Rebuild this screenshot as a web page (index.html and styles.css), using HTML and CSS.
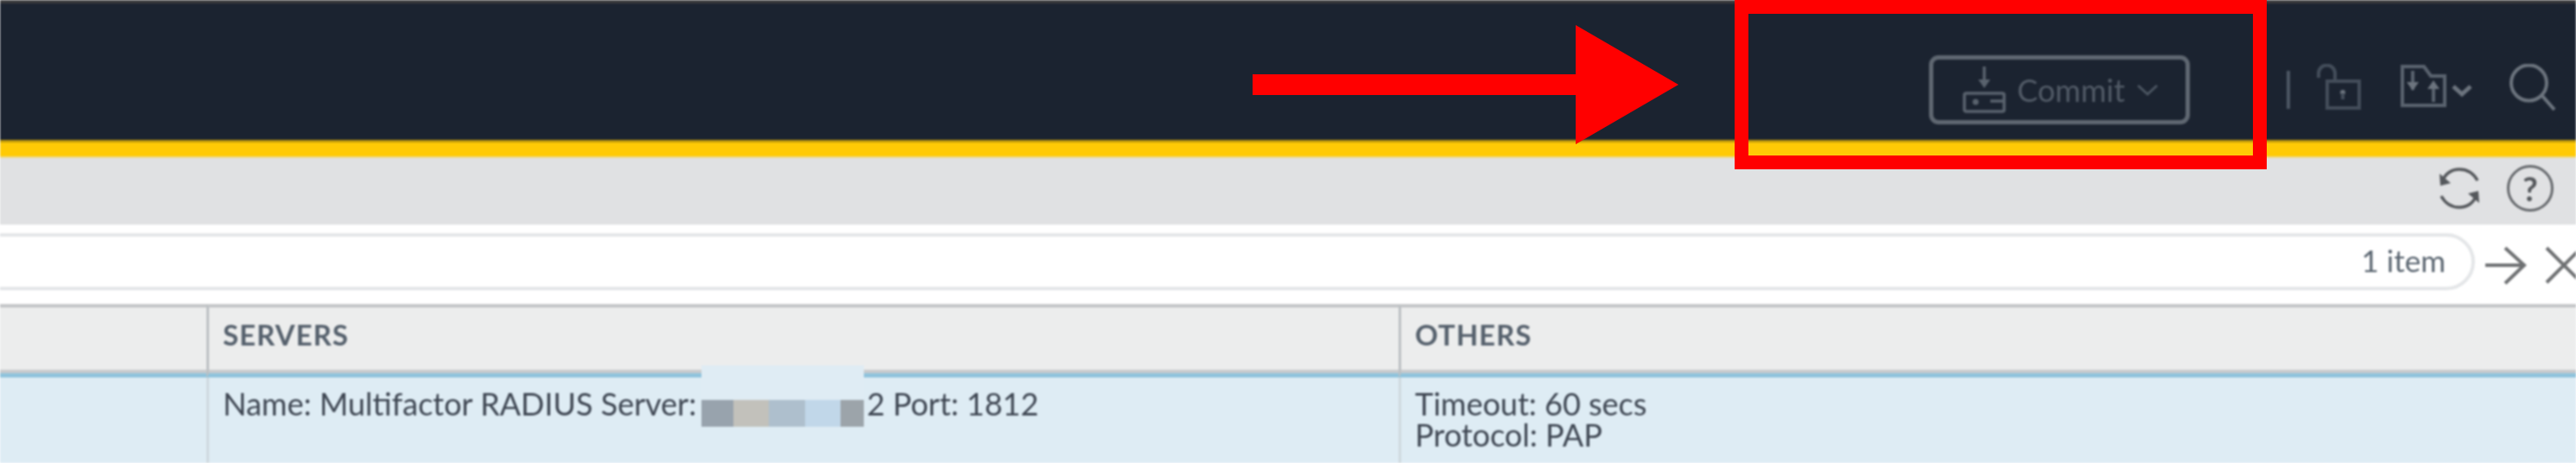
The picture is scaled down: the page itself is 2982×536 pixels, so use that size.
FILE: index.html
```html
<!DOCTYPE html>
<html lang="en">

<head>
    <meta charset="UTF-8">
    <meta name="viewport" content="width=device-width, initial-scale=1.0">
    <title>Authentication Profile - Commit</title>
    <link rel="stylesheet" href="styles.css">
</head>

<body>
    <div class="page">
        <div class="screen">
            <!-- top bar -->
            <header class="topbar">
                <button class="commit" type="button">
                    <svg class="commit-icon" width="50" height="54" viewBox="0 0 50 54">
                        <path class="line" d="M25 0V20" />
                        <path class="fill" d="M18 15L25 25L32 15Z" />
                        <rect class="line" x="2" y="31" width="46" height="21" rx="2" />
                        <circle class="fill" cx="15" cy="41" r="3.5" />
                        <path class="line" d="M32 40H48" />
                    </svg>
                    <span class="commit-text">Commit</span>
                    <svg class="commit-caret" width="24" height="14" viewBox="0 0 24 14">
                        <path class="caret-line" d="M1 2L12 12L23 2" />
                    </svg>
                </button>
                <span class="divider"></span>
                <svg class="ico ico-lock" width="56" height="60" viewBox="0 0 56 60">
                    <path class="line" d="M4 16V11a9.5 9.5 0 0 1 19 0V18" />
                    <rect class="line" x="14" y="20" width="37" height="31" />
                    <circle class="fill" cx="32" cy="33" r="3" />
                    <path class="line" d="M32 34V41" />
                </svg>
                <svg class="ico ico-folder" width="86" height="60" viewBox="0 0 86 60">
                    <path class="line" d="M3 3H28L36 14H52V48H3Z" />
                    <path class="line" d="M15 8V30M39 22V44" />
                    <path class="fill" d="M8 21L15 31L22 21ZM32 29L39 19L46 29Z" />
                    <path class="line thick" d="M62 26L72 35L82 26" />
                </svg>
                <svg class="ico ico-search" width="56" height="60" viewBox="0 0 56 60">
                    <circle class="line" cx="24.5" cy="22" r="20.5" />
                    <path class="line" d="M40 37L54 53" />
                </svg>
            </header>
            <div class="accent"></div>

            <!-- refresh and help -->
            <div class="toolbar">
                <svg width="50" height="48" viewBox="0 0 50 48">
                    <path class="tool-line" d="M5 17C8 7 16 2 25 2C33 2 41 6 46 15" />
                    <path class="tool-line" d="M45 31C42 41 34 46 25 46C17 46 9 42 4 33" />
                    <path class="tool-fill" d="M2 7L3 21L15 18Z" />
                    <path class="tool-fill" d="M48 41L47 27L35 30Z" />
                </svg>
                <span class="help">?</span>
            </div>

            <!-- filter -->
            <div class="filter">
                <div class="filter-box"><span class="count">1 item</span></div>
                <svg class="filter-go" width="50" height="50" viewBox="0 0 50 50">
                    <path class="filter-line" d="M2 25H46M25 5L47 25L25 46" />
                </svg>
                <svg class="filter-clear" width="46" height="46" viewBox="0 0 46 46">
                    <path class="filter-line" d="M3 3L43 43M43 3L3 43" />
                </svg>
            </div>

            <!-- table -->
            <div class="table">
                <div class="head-cell"></div>
                <div class="head-cell">SERVERS</div>
                <div class="head-cell">OTHERS</div>
                <div class="cell"></div>
                <div class="cell">Name: Multifactor RADIUS Server: <span class="redact"><i class="m1"></i><i class="m2"></i><i class="m3"></i><i class="m4"></i><i class="m5"></i></span>2 Port: 1812</div>
                <div class="cell">Timeout: 60 secs<br>Protocol: PAP</div>
            </div>
        </div>

        <!-- red marks drawn over the screenshot -->
        <svg class="mark-arrow" width="493" height="138" viewBox="0 0 493 138">
            <path d="M0 57H374V0L493 69L374 138V81H0Z" />
        </svg>
        <div class="mark-box"></div>
    </div>
</body>

</html>
```

FILE: styles.css
```css
* {
    box-sizing: border-box;
}

body {
    margin: 0;
    background: #fff;
    font-family: "Lato", "Liberation Sans", sans-serif;
}

.page {
    position: relative;
    width: 2982px;
    height: 536px;
    overflow: hidden;
}

.screen {
    height: 536px;
    overflow: hidden;
    filter: blur(0.8px);
}

/* top bar */
.topbar {
    display: flex;
    align-items: center;
    justify-content: flex-end;
    height: 162px;
    padding: 42px 23px 0 0;
    border-top: 4px solid #3a3a3c;
    background-color: #1b2330;
}

.commit {
    display: flex;
    align-items: center;
    width: 302px;
    height: 80px;
    padding: 0 0 0 34px;
    border: 5px solid #5f6771;
    border-radius: 11px;
    background: none;
    font-family: inherit;
}

.commit .line {
    fill: none;
    stroke: #59626d;
    stroke-width: 3.5;
}

.commit .fill {
    fill: #59626d;
}

.commit-text {
    margin-left: 13px;
    font-size: 36px;
    color: #515a66;
}

.commit-caret {
    margin-left: 14px;
}

.caret-line {
    fill: none;
    stroke: #4b5561;
    stroke-width: 3;
}

.divider {
    width: 4px;
    height: 44px;
    margin-left: 112px;
    background-color: #4c5663;
}

.ico-lock {
    margin-left: 29px;
}

.ico-folder {
    margin-left: 42px;
}

.ico-search {
    margin-left: 39px;
}

.ico .line {
    fill: none;
    stroke: #59626e;
    stroke-width: 4;
}

.ico .fill {
    fill: #6c747e;
}

.ico .thick {
    stroke: #6c747e;
    stroke-width: 5;
}

.ico-lock .line {
    stroke: #434d5a;
}

.ico-search .line {
    stroke: #6c747e;
}

.accent {
    height: 21px;
    border-top: 3px solid #c29c0c;
    border-bottom: 2px solid #ecd98c;
    background-color: #ffca05;
}

/* refresh and help */
.toolbar {
    display: flex;
    align-items: center;
    justify-content: flex-end;
    gap: 30px;
    height: 77px;
    padding: 0 26px 7px 0;
    background-color: #e0e1e3;
}

.tool-line {
    fill: none;
    stroke: #55585c;
    stroke-width: 3.5;
}

.tool-fill {
    fill: #55585c;
}

.help {
    width: 54px;
    height: 54px;
    border: 3px solid #66696d;
    border-radius: 50%;
    font-size: 38px;
    font-weight: bold;
    line-height: 48px;
    text-align: center;
    color: #55585c;
}

/* filter */
.filter {
    display: flex;
    align-items: flex-start;
    height: 92px;
    padding-top: 10px;
    margin-left: -40px;
    background-color: #fff;
}

.filter-box {
    display: flex;
    align-items: center;
    justify-content: flex-end;
    flex: none;
    width: 2905px;
    height: 66px;
    padding-right: 30px;
    border: 4px solid #e4e6e8;
    border-radius: 33px;
}

.count {
    font-size: 35px;
    line-height: 50px;
    margin-top: -4px;
    color: #5a6570;
}

.filter-go {
    flex: none;
    margin: 12px 0 0 10px;
}

.filter-clear {
    flex: none;
    margin: 14px 0 0 20px;
}

.filter-line {
    fill: none;
    stroke: #6f7173;
    stroke-width: 4;
}

/* table */
.table {
    display: grid;
    grid-template-columns: 239px 1380px 1363px;
    grid-template-rows: 85px 99px;
    background-color: #deecf4;
}

.head-cell {
    padding: 9px 0 0 16px;
    border-top: 4px solid #c4c6c8;
    border-left: 3px solid #bcc0c3;
    border-bottom: 5px solid #8fc3dc;
    box-shadow: inset 0 -4px 0 #c8cbcd;
    background-color: #eceded;
    font-size: 33px;
    font-weight: bold;
    letter-spacing: 1px;
    line-height: 44px;
    color: #56616d;
}

.head-cell:first-child {
    border-left: 0;
}

.cell {
    padding: 12px 0 0 16px;
    border-left: 3px solid #cfd9df;
    font-size: 36px;
    line-height: 36px;
    color: #3f4753;
}

.cell:nth-child(4) {
    border-left: 0;
}

/* blurred out address */
.redact {
    position: relative;
    display: inline-flex;
    width: 188px;
    height: 31px;
    margin: 0 3px 0 -3px;
    vertical-align: -13px;
}

.redact::before {
    content: "";
    position: absolute;
    left: 0;
    bottom: 100%;
    width: 188px;
    height: 40px;
    background-color: #dfecf4;
}

.redact i {
    display: block;
    height: 31px;
}

.m1 {
    width: 37px;
    background-color: #98a3ad;
}

.m2 {
    width: 41px;
    background-color: #c2c1bb;
}

.m3 {
    width: 42px;
    background-color: #aebfcd;
}

.m4 {
    width: 41px;
    background-color: #c1d7e9;
}

.m5 {
    width: 27px;
    background-color: #9ca4aa;
}

/* red marks */
.mark-arrow {
    position: absolute;
    left: 1450px;
    top: 29px;
    fill: #f00;
}

.mark-box {
    position: absolute;
    left: 2008px;
    top: 0;
    width: 616px;
    height: 196px;
    border: 16px solid #f00;
}
```
